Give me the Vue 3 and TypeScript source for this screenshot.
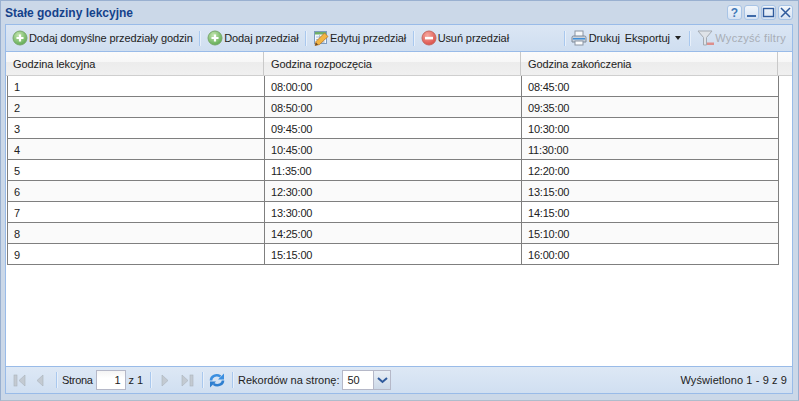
<template>
  <div class="window">
    <div class="titlebar">
      <span class="title">Stałe godziny lekcyjne</span>
      <div class="tools">
        <button v-for="t in windowTools" :key="t" class="tool">
          <svg width="13" height="13" viewBox="0 0 13 13">
            <text v-if="t === 'help'" x="6.5" y="11" text-anchor="middle" class="help">?</text>
            <rect v-if="t === 'min'" x="2" y="9" width="9" height="2" fill="#3f6aa8" />
            <rect v-if="t === 'max'" x="1.5" y="2.5" width="10" height="8" fill="none" stroke="#2f5a9c" stroke-width="1.4" />
            <path v-if="t === 'close'" d="M2 2l9 9M11 2l-9 9" stroke="#2f5a9c" stroke-width="1.5" fill="none" />
          </svg>
        </button>
      </div>
    </div>

    <div class="panel">
      <div class="toolbar">
        <span class="btn">
          <svg class="ico" width="16" height="16" viewBox="0 0 16 16"><use href="#add" /></svg>
          <span>Dodaj domyślne przedziały godzin</span>
        </span>
        <i class="sep"></i>
        <span class="btn">
          <svg class="ico" width="16" height="16" viewBox="0 0 16 16"><use href="#add" /></svg>
          <span>Dodaj przedział</span>
        </span>
        <i class="sep"></i>
        <span class="btn">
          <svg class="ico" width="16" height="16" viewBox="0 0 16 16">
            <rect x="1.5" y="1.5" width="12" height="12" fill="#f4f8fc" stroke="#7d9cc0" />
            <rect x="2" y="2" width="11" height="2.5" fill="#6fae6a" />
            <path d="M3 7h9M3 9.500h9M3 12h9M6.500 5v8M10 5v8" stroke="#a9c0da" stroke-width="1" />
            <path d="M2 15.500l1-4 8.500-8.500 3.500 3.500-8.500 8z" fill="#f2b544" stroke="#b9772a" stroke-width=".8" />
            <path d="M2 15.500l1-3 2.200 2.200z" fill="#6a4a2a" />
          </svg>
          <span>Edytuj przedział</span>
        </span>
        <i class="sep"></i>
        <span class="btn">
          <svg class="ico" width="16" height="16" viewBox="0 0 16 16">
            <defs>
              <radialGradient id="redg" cx=".4" cy=".3" r=".8">
                <stop offset="0" stop-color="#f7a8a0" />
                <stop offset="1" stop-color="#d8443c" />
              </radialGradient>
            </defs>
            <circle cx="8" cy="8" r="7" fill="url(#redg)" stroke="#c46a62" />
            <rect x="4" y="6.800" width="8" height="2.600" fill="#fff" />
          </svg>
          <span>Usuń przedział</span>
        </span>
        <span class="fill"></span>
        <i class="sep"></i>
        <span class="btn print">
          <svg class="ico" width="16" height="16" viewBox="0 0 16 16">
            <rect x="4" y="1" width="8" height="6" fill="#f7f9fb" stroke="#8c96a3" />
            <path d="M1 7.500Q1 6 2.500 6h11Q15 6 15 7.500V12H1z" fill="#ccd3dc" stroke="#7f8a98" />
            <rect x="2" y="8" width="12" height="1.500" fill="#3f8fd8" />
            <rect x="4" y="11" width="8" height="4" fill="#fbfcfd" stroke="#8c96a3" />
          </svg>
          <span>Drukuj</span>
        </span>
        <span class="btn export">Eksportuj<b class="caret"></b></span>
        <i class="sep"></i>
        <span class="btn disabled">
          <svg class="ico" width="17" height="17" viewBox="0 0 17 17">
            <path d="M1 1h14L9.500 7.500V15h-3V7.500z" fill="#dfe3e8" stroke="#a5abb2" />
            <rect x="10" y="12.500" width="7" height="2.500" fill="#dd8f8c" />
          </svg>
          <span class="wide">Wyczyść filtry</span>
        </span>
      </div>

      <div class="grid-head">
        <div v-for="c in columns" :key="c" class="hcell">{{ c }}</div>
        <div class="hrest"></div>
      </div>

      <div class="grid-body">
        <div v-for="(r, i) in rows" :key="r[0]" class="row" :class="{ alt: i % 2 === 1 }">
          <div v-for="c in r" :key="c" class="cell">{{ c }}</div>
        </div>
      </div>

      <div class="pager">
        <svg class="pg" width="16" height="16" viewBox="0 0 16 16"><rect x="2" y="3" width="3" height="11" fill="#c3cad2" stroke="#aab2bb" stroke-width=".6" /><path d="M13 3v11L7 8.500z" fill="#c3cad2" stroke="#aab2bb" stroke-width=".6" /></svg>
        <svg class="pg prev" width="16" height="16" viewBox="0 0 16 16"><path d="M11 3v11L5 8.500z" fill="#c3cad2" stroke="#aab2bb" stroke-width=".6" /></svg>
        <i class="sep"></i>
        <span class="lbl strona">Strona</span>
        <span class="page-input">1</span>
        <span class="lbl">z 1</span>
        <i class="sep"></i>
        <svg class="pg next" width="16" height="16" viewBox="0 0 16 16"><path d="M5 3v11l6-5.500z" fill="#c3cad2" stroke="#aab2bb" stroke-width=".6" /></svg>
        <svg class="pg last" width="16" height="16" viewBox="0 0 16 16"><path d="M3 3v11l6-5.500z" fill="#c3cad2" stroke="#aab2bb" stroke-width=".6" /><rect x="11" y="3" width="3" height="11" fill="#c3cad2" stroke="#aab2bb" stroke-width=".6" /></svg>
        <i class="sep"></i>
        <svg class="pg next" width="16" height="16" viewBox="0 0 16 16">
          <path d="M2 8.500C2 4.500 7 1.500 11.500 4.500" fill="none" stroke="#3b8fe0" stroke-width="2.600" />
          <path d="M9 7.500h6V1.500z" fill="#3b8fe0" />
          <path d="M14 8.500C14 12 9 15 4.500 12" fill="none" stroke="#2f7fd0" stroke-width="2.600" />
          <path d="M7 9.500H1v6z" fill="#2f7fd0" />
        </svg>
        <i class="sep"></i>
        <span class="lbl records">Rekordów na stronę:</span>
        <span class="combo"><span class="val">50</span><span class="arrow"><svg width="11" height="7" viewBox="0 0 11 7"><path d="M1 1l4.500 4L10 1" fill="none" stroke="#2f5a9c" stroke-width="2" /></svg></span></span>
        <span class="fill"></span>
        <span class="lbl info">Wyświetlono 1 - 9 z 9</span>
      </div>
    </div>

    <svg width="0" height="0" class="defs">
      <defs>
        <radialGradient id="greeng" cx=".4" cy=".3" r=".8">
          <stop offset="0" stop-color="#c4e6b0" />
          <stop offset="1" stop-color="#55a548" />
        </radialGradient>
        <g id="add">
          <circle cx="8" cy="8" r="7" fill="url(#greeng)" stroke="#7aa86e" />
          <path d="M8 4.500v7M4.500 8h7" stroke="#fff" stroke-width="2.200" />
        </g>
      </defs>
    </svg>
  </div>
</template>

<script setup lang="ts">
const windowTools = ['help', 'min', 'max', 'close']

const columns = ['Godzina lekcyjna', 'Godzina rozpoczęcia', 'Godzina zakończenia']

const rows: string[][] = [
  ['1', '08:00:00', '08:45:00'],
  ['2', '08:50:00', '09:35:00'],
  ['3', '09:45:00', '10:30:00'],
  ['4', '10:45:00', '11:30:00'],
  ['5', '11:35:00', '12:20:00'],
  ['6', '12:30:00', '13:15:00'],
  ['7', '13:30:00', '14:15:00'],
  ['8', '14:25:00', '15:10:00'],
  ['9', '15:15:00', '16:00:00'],
]
</script>

<style>
html, body { margin: 0; background: #fff; }
</style>

<style scoped>
.window {
  width: 799px;
  height: 401px;
  box-sizing: border-box;
  display: flex;
  flex-direction: column;
  padding: 0 5px 6px 4px;
  background: #cbd8e8;
  border: 1px solid #99b0d0;
  border-bottom-color: #aebccc;
  font: 11px "Liberation Sans", Arial, sans-serif;
  letter-spacing: -0.1px;
  color: #222;
  overflow: hidden;
}
.titlebar {
  height: 23px;
  flex: none;
  display: flex;
  align-items: center;
  justify-content: space-between;
}
.title {
  font-weight: bold;
  font-size: 12px;
  letter-spacing: 0;
  color: #15428b;
}
.tools { display: flex; gap: 2px; }
.tool {
  width: 15px;
  height: 15px;
  padding: 0;
  border: 1px solid #a8c4e6;
  border-radius: 3px;
  background: linear-gradient(#f2f6fb, #d6e3f3);
  display: flex;
  align-items: center;
  justify-content: center;
}
.help { font: bold 12px "Liberation Sans", sans-serif; fill: #3f78b8; }
.panel {
  flex: 1;
  min-height: 0;
  display: flex;
  flex-direction: column;
  background: #fff;
  border: 1px solid #99bbe8;
}
.toolbar {
  height: 27px;
  flex: none;
  box-sizing: border-box;
  display: flex;
  align-items: center;
  padding: 0 6px;
  background: linear-gradient(#dbe6f4, #cfdef0);
  border-bottom: 1px solid #99bbe8;
}
.btn {
  display: flex;
  align-items: center;
  gap: 1px;
  white-space: pre;
  color: #222;
}
.ico { flex: none; }
.sep {
  width: 1px;
  height: 15px;
  margin: 0 6px 0 6.5px;
  background: #a9c8ee;
  border-right: 1px solid #e8f0fa;
  flex: none;
}
.fill { flex: 1; }
.print { gap: 2px; margin-left: -1px; }
.export { margin-left: 5px; gap: 5px; }
.caret {
  display: inline-block;
  margin-right: 2px;
  border: 3px solid transparent;
  border-top: 4px solid #222;
  border-bottom: 0;
}
.disabled { color: #a8adb5; }
.wide { letter-spacing: 0.3px; }
.grid-head {
  height: 24px;
  flex: none;
  box-sizing: border-box;
  display: flex;
  background: linear-gradient(#fbfbfb 0, #f7f7f7 42%, #ececec 43%, #f0f0f0 100%);
  border-bottom: 1px solid #cfcfcf;
}
.hcell {
  width: 257px;
  flex: none;
  box-sizing: border-box;
  padding: 6px 0 0 7px;
  border-right: 1px solid #c9c9c9;
  color: #222;
}
.hcell:first-child { width: 258px; }
.hrest { flex: 1; }
.grid-body { flex: 1; min-height: 0; padding-left: 1px; }
.row {
  width: 772px;
  height: 21px;
  box-sizing: border-box;
  display: flex;
  border-left: 1px solid #7f7f7f;
  border-right: 1px solid #7f7f7f;
  border-bottom: 1px solid #7f7f7f;
  background: #fff;
}
.row.alt { background: #fafafa; }
.cell {
  width: 257px;
  flex: none;
  box-sizing: border-box;
  padding: 5px 0 0 6px;
  border-right: 1px solid #7f7f7f;
  letter-spacing: -0.2px;
  color: #222;
}
.cell:last-child { border-right: 0; flex: 1; }
.pager {
  height: 27px;
  flex: none;
  box-sizing: border-box;
  display: flex;
  align-items: center;
  padding: 0 5px 0 6px;
  background: linear-gradient(#dde8f5, #d0dff1);
  border-top: 1px solid #99bbe8;
}
.pager .sep { margin: 0 4px 0 7px; height: 16px; }
.pg { flex: none; }
.prev { margin: 0 1px 0 4px; }
.next { margin-left: 1px; }
.last { margin-left: 6px; }
.lbl { white-space: pre; }
.strona { letter-spacing: -0.3px; }
.records { letter-spacing: 0; }
.info { letter-spacing: 0.1px; }
.page-input {
  width: 30px;
  height: 20px;
  box-sizing: border-box;
  margin: 0 3px;
  padding: 3px 4px 0 0;
  text-align: right;
  background: linear-gradient(#f4f4f4, #fff 40%);
  border: 1px solid #b5b8c8;
}
.combo {
  display: flex;
  width: 49px;
  height: 20px;
  margin-left: 3px;
  box-sizing: border-box;
  background: #fff;
  border: 1px solid #b5b8c8;
}
.val { flex: 1; padding: 3px 0 0 4px; }
.arrow {
  width: 16px;
  display: flex;
  align-items: center;
  justify-content: center;
  background: linear-gradient(#e8eef6, #cdd9e8);
  border-left: 1px solid #b5b8c8;
}
.defs { position: absolute; }
</style>
